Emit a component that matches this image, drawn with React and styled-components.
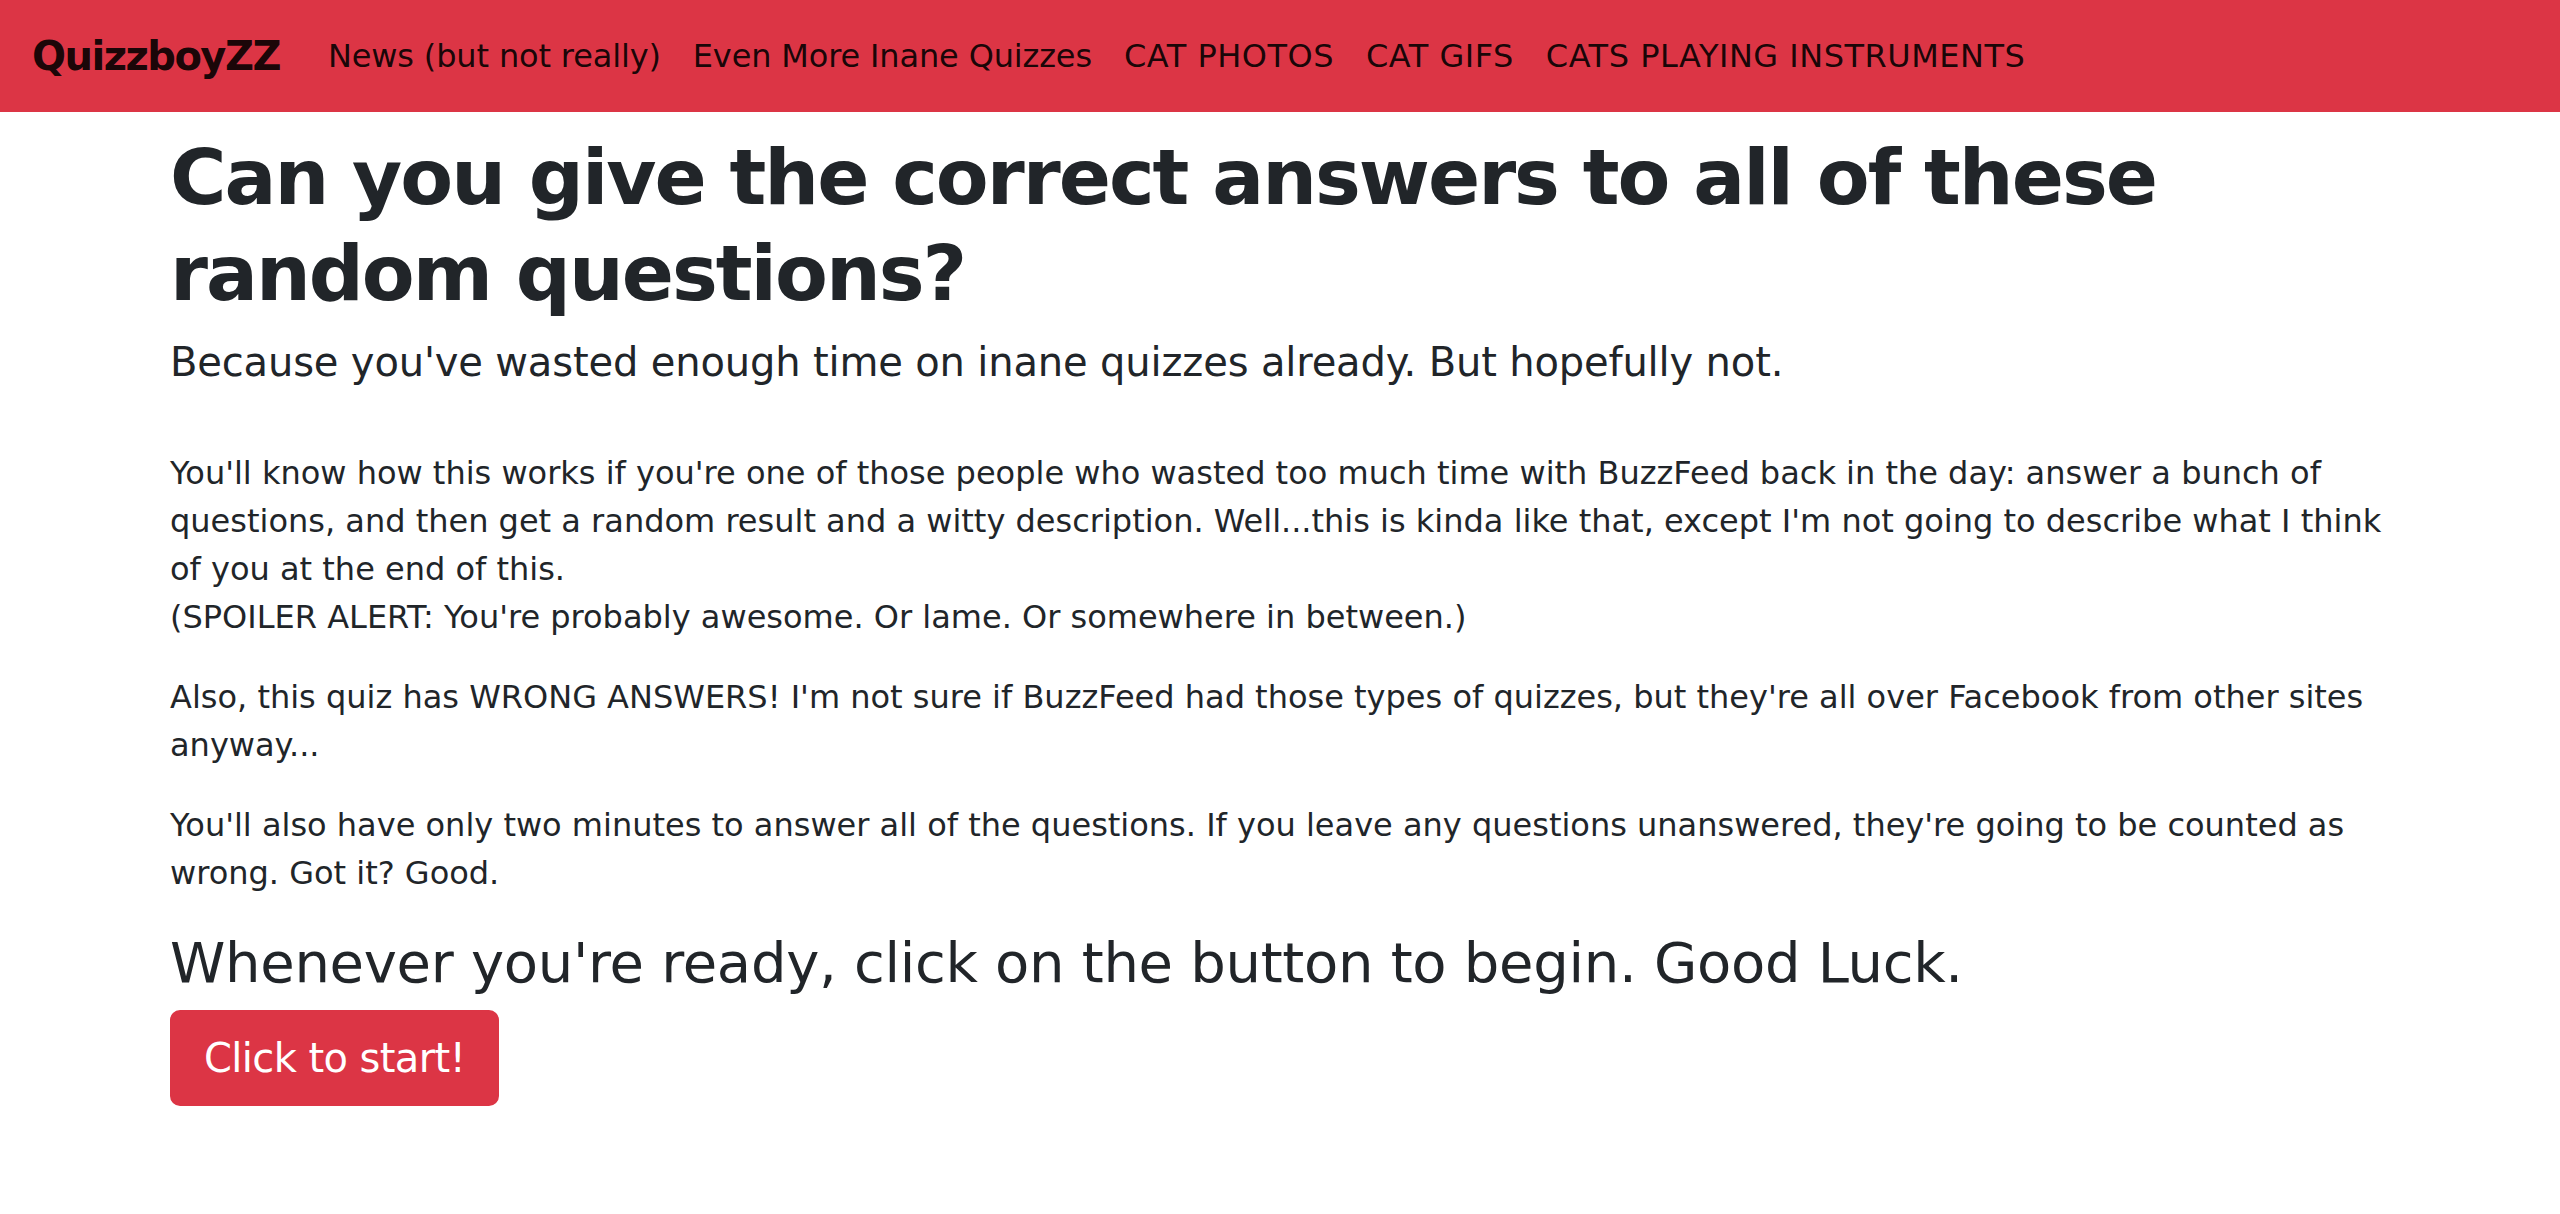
import React from "react";
import styled, { createGlobalStyle } from "styled-components";

const GlobalStyle = createGlobalStyle`
  html, body {
    margin: 0;
    padding: 0;
    background: #fff;
  }
  body {
    font-family: "DejaVu Sans", "Liberation Sans", sans-serif;
    color: #212529;
  }
  * {
    box-sizing: border-box;
  }
`;

const StyledNavbar = styled.nav`
  display: flex;
  align-items: center;
  height: 112px;
  padding: 16px 32px;
  background-color: #dc3545;
`;

const StyledBrand = styled.a`
  margin-right: 32px;
  padding: 10px 0;
  font-size: 40px;
  line-height: 60px;
  font-weight: bold;
  letter-spacing: -1.5px;
  color: rgba(0, 0, 0, 0.9);
  text-decoration: none;
  white-space: nowrap;
`;

const StyledNavList = styled.ul`
  display: flex;
  margin: 0;
  padding: 0;
  list-style: none;
`;

// the caps links run a bit wider in the original font
const StyledNavLink = styled.a`
  display: block;
  padding: 8px 16px;
  font-size: 32px;
  line-height: 48px;
  letter-spacing: ${(props) => (props.caps ? "0.5px" : "-0.15px")};
  color: rgba(0, 0, 0, 0.9);
  text-decoration: none;
  white-space: nowrap;
`;

const StyledContainer = styled.main`
  max-width: 2280px;
  margin: 0 auto;
  padding: 0 30px;
`;

const StyledTitle = styled.h1`
  margin: 18px 0 16px;
  font-size: 77px;
  line-height: 96px;
  font-weight: bold;
  letter-spacing: -2px;
`;

const StyledSubtitle = styled.h5`
  margin: 0 0 63px;
  font-size: 40px;
  line-height: 48px;
  font-weight: normal;
  letter-spacing: -0.15px;
`;

const StyledText = styled.p`
  margin: 0 0 32px;
  font-size: 32px;
  line-height: 48px;
`;

const StyledCallout = styled.h3`
  margin: 0 0 14px;
  font-size: 56px;
  line-height: 67px;
  font-weight: normal;
  letter-spacing: -0.3px;
`;

const StartButton = styled.button`
  display: inline-block;
  padding: 16px 32px;
  border: 2px solid #dc3545;
  border-radius: 10px;
  background-color: #dc3545;
  color: #fff;
  font-family: inherit;
  font-size: 40px;
  line-height: 60px;
  letter-spacing: -0.6px;
  cursor: pointer;
`;

const links = [
  "News (but not really)",
  "Even More Inane Quizzes",
  "CAT PHOTOS",
  "CAT GIFS",
  "CATS PLAYING INSTRUMENTS",
];

function App() {
  return (
    <React.Fragment>
      <GlobalStyle />
      <StyledNavbar>
        <StyledBrand href="#">QuizzboyZZ</StyledBrand>
        <StyledNavList>
          {links.map((link) => (
            <li key={link}>
              <StyledNavLink href="#" caps={link === link.toUpperCase()}>
                {link}
              </StyledNavLink>
            </li>
          ))}
        </StyledNavList>
      </StyledNavbar>
      <StyledContainer>
        <StyledTitle>
          Can you give the correct answers to all of these random questions?
        </StyledTitle>
        <StyledSubtitle>
          Because you've wasted enough time on inane quizzes already. But
          hopefully not.
        </StyledSubtitle>
        <StyledText>
          You'll know how this works if you're one of those people who wasted
          too much time with BuzzFeed back in the day: answer a bunch of
          questions, and then get a random result and a witty description.
          Well...this is kinda like that, except I'm not going to describe what
          I think of you at the end of this.
          <br />
          (SPOILER ALERT: You're probably awesome. Or lame. Or somewhere in
          between.)
        </StyledText>
        <StyledText>
          Also, this quiz has WRONG ANSWERS! I'm not sure if BuzzFeed had those
          types of quizzes, but they're all over Facebook from other sites
          anyway...
        </StyledText>
        <StyledText>
          You'll also have only two minutes to answer all of the questions. If
          you leave any questions unanswered, they're going to be counted as
          wrong. Got it? Good.
        </StyledText>
        <StyledCallout>
          Whenever you're ready, click on the button to begin. Good Luck.
        </StyledCallout>
        <StartButton>Click to start!</StartButton>
      </StyledContainer>
    </React.Fragment>
  );
}

export default App;
